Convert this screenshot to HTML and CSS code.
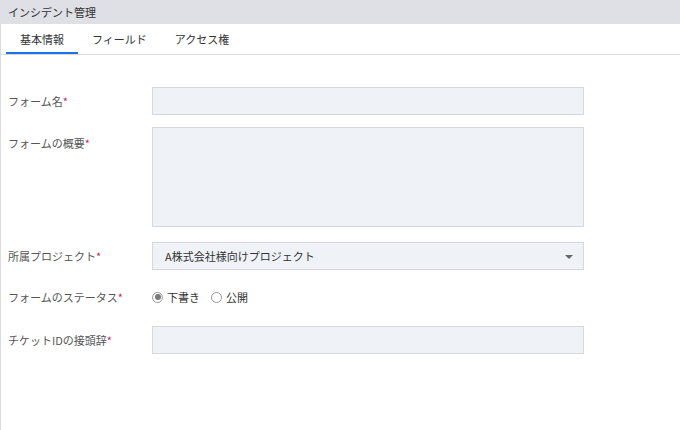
FILE: index.html
```html
<!DOCTYPE html>
<html lang="ja">
<head>
<meta charset="utf-8">
<link rel="stylesheet" href="styles.css">
</head>
<body>
<div class="page">
  <div class="header">インシデント管理</div>
  <div class="tabs">
    <div class="tab active">基本情報</div>
    <div class="tab">フィールド</div>
    <div class="tab">アクセス権</div>
  </div>
  <div class="form">
    <div class="row r1">
      <div class="label">フォーム名<span class="req">*</span></div>
      <div class="field input"></div>
    </div>
    <div class="row r2 top">
      <div class="label">フォームの概要<span class="req">*</span></div>
      <div class="field textarea"></div>
    </div>
    <div class="row r3">
      <div class="label">所属プロジェクト<span class="req">*</span></div>
      <div class="field input select">
        <span class="select-text">A株式会社様向けプロジェクト</span>
        <span class="caret"></span>
      </div>
    </div>
    <div class="row r4">
      <div class="label">フォームのステータス<span class="req">*</span></div>
      <div class="radios">
        <span class="radio checked"></span><span class="radio-label">下書き</span>
        <span class="radio"></span><span class="radio-label">公開</span>
      </div>
    </div>
    <div class="row r5">
      <div class="label">チケットIDの接頭辞<span class="req">*</span></div>
      <div class="field input"></div>
    </div>
  </div>
</div>
</body>
</html>
```
FILE: styles.css
```css
* { box-sizing: border-box; }
html, body { margin: 0; padding: 0; background: #fff; }
body {
  font-family: "Noto Sans CJK JP", "Noto Sans", sans-serif;
  font-size: 11px;
  color: #333;
}
.page {
  width: 680px;
  height: 430px;
  border-left: 1px solid #dcdde2;
}
.header {
  height: 24px;
  line-height: 25px;
  background: #dfe0e5;
  padding-left: 8px;
  color: #333;
  margin-left: -1px;
}
.tabs {
  display: flex;
  height: 31px;
  border-bottom: 1px solid #d9d9d9;
  padding-left: 5px;
}
.tab {
  padding: 0 14px;
  line-height: 30px;
  color: #333;
  border-bottom: 2px solid transparent;
}
.tab.active { border-bottom-color: #1a73e8; }
.form {
  padding: 32px 0 0 7px;
}
.row {
  display: flex;
  align-items: center;
}
.row.top { align-items: flex-start; }
.r1 { height: 28px; }
.r2 { margin-top: 12px; height: 100px; }
.r2 .label { padding-top: 8px; }
.r3 { margin-top: 15px; height: 28px; }
.r4 { margin-top: 13px; height: 28px; }
.r5 { margin-top: 15px; height: 28px; }
.label {
  width: 144px;
  color: #555;
}
.req { color: #d11a5c; }
.field {
  width: 432px;
  background: #eff2f6;
  border: 1px solid #d5d8dd;
}
.input { height: 28px; }
.textarea { height: 100px; }
.select {
  display: flex;
  align-items: center;
  justify-content: space-between;
  padding: 0 10px 0 12px;
}
.select-text { color: #333; }
.caret {
  width: 0;
  height: 0;
  border-left: 4px solid transparent;
  border-right: 4px solid transparent;
  border-top: 4px solid #666;
  margin-top: 2px;
}
.radios {
  display: flex;
  align-items: center;
}
.radio {
  width: 11px;
  height: 11px;
  border: 1px solid #999;
  border-radius: 50%;
  background: #fff;
  display: inline-flex;
  align-items: center;
  justify-content: center;
  margin-right: 4px;
}
.radio.checked::after {
  content: "";
  width: 6px;
  height: 6px;
  border-radius: 50%;
  background: #7a7a7a;
}
.radio-label { margin-right: 11px; color: #333; }
```
